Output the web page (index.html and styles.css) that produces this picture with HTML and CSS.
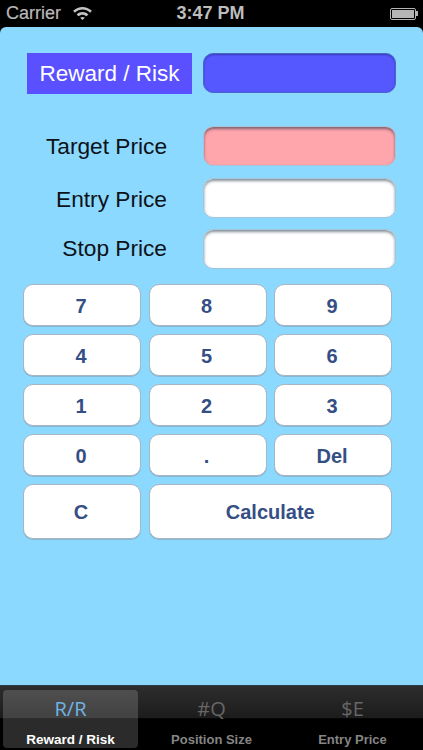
FILE: index.html
```html
<!DOCTYPE html>
<html lang="en">
<head>
<meta charset="utf-8">
<title>Reward / Risk</title>
<link rel="stylesheet" href="styles.css">
</head>
<body>
<div class="status">
  <div class="status-left">
    <span>Carrier</span>
    <svg class="wifi" viewBox="0 0 22 16" width="21" height="15"><path d="M1 6.200C6.800.6 15.200.6 21 6.200l-1.900 2C14.400 3.800 7.600 3.800 2.900 8.200z"/><path d="M4.800 10C8.400 6.600 13.600 6.600 17.200 10l-1.900 2c-2.500-2.300-6.100-2.300-8.600 0z"/><path d="M8.500 13.700c1.500-1.300 3.500-1.300 5 0L11 16z"/></svg>
  </div>
  <div class="status-time">3:47 PM</div>
  <div class="battery"><div class="battery-body"><div class="battery-fill"></div></div><div class="battery-tip"></div></div>
</div>
<main class="screen">
  <section class="row row-result">
    <div class="title">Reward / Risk</div>
    <div class="field field-result"></div>
  </section>
  <section class="prices">
    <div class="row"><label class="price-label label-target">Target Price</label><div class="field field-target"></div></div>
    <div class="row"><label class="price-label label-entry">Entry Price</label><div class="field"></div></div>
    <div class="row"><label class="price-label label-stop">Stop Price</label><div class="field"></div></div>
  </section>
  <section class="keypad">
    <button class="key">7</button><button class="key">8</button><button class="key">9</button>
    <button class="key">4</button><button class="key">5</button><button class="key">6</button>
    <button class="key">1</button><button class="key">2</button><button class="key">3</button>
    <button class="key">0</button><button class="key">.</button><button class="key">Del</button>
    <button class="key key-tall">C</button><button class="key key-tall key-wide">Calculate</button>
  </section>
</main>
<nav class="tabs">
  <div class="tab tab-active"><span class="tab-icon">R/R</span><span class="tab-label">Reward / Risk</span></div>
  <div class="tab"><span class="tab-icon">#Q</span><span class="tab-label">Position Size</span></div>
  <div class="tab"><span class="tab-icon">$E</span><span class="tab-label">Entry Price</span></div>
</nav>
</body>
</html>
```
FILE: styles.css
```css
* { box-sizing: border-box; }
html, body { margin: 0; padding: 0; }
body {
  width: 423px;
  height: 750px;
  overflow: hidden;
  background: #000;
  font-family: "Liberation Sans", Arial, sans-serif;
  display: flex;
  flex-direction: column;
}
.status {
  height: 27px;
  flex: none;
  display: grid;
  grid-template-columns: 1fr auto 1fr;
  align-items: center;
  padding: 0 5px 0 6px;
  color: #b9b9b9;
  font-size: 18px;
  background: #000;
}
.status-left { display: flex; align-items: center; gap: 11px; -webkit-text-stroke: 0.2px #b9b9b9; }
.wifi { fill: #c4c4c4; margin-top: -3px; }
.status-time { font-weight: 700; font-size: 18px; color: #bdbdbd; margin-left: -3px; }
.battery { justify-self: end; display: flex; align-items: center; }
.battery-body { width: 26px; height: 12px; border: 1px solid #b5b5b5; padding: 1px; border-radius: 2px; }
.battery-fill { width: 100%; height: 100%; background: #b5b5b5; }
.battery-tip { width: 2px; height: 5px; background: #b5b5b5; }
.screen {
  flex: 1;
  background: #8bd9ff;
  border-radius: 6px 6px 0 0;
  padding: 26px 27px 0 23px;
  display: flex;
  flex-direction: column;
}
.row { display: grid; grid-template-columns: 144px 193px; column-gap: 36px; align-items: center; justify-content: start; }
.row-result { grid-template-columns: 165px 193px; column-gap: 11px; margin-left: 4px; align-items: start; }
.title {
  height: 41px;
  background: #5a50ff;
  color: #fff;
  font-size: 22.5px;
  display: flex;
  align-items: center;
  justify-content: center;
  padding-top: 1px;
}
.field {
  height: 40px;
  background: #fff;
  border-radius: 10px;
  border: 1px solid #a3c4da;
  box-shadow: inset 0 2px 3px rgba(50, 70, 85, .6);
}
.field-result { background: #5558ff; border-color: #4a66c8; box-shadow: inset 0 1px 2px rgba(30, 40, 130, .6); }
.field-target { background: #ffa6ac; box-shadow: inset 0 2px 3px rgba(60, 60, 80, .65); }
.prices { margin-top: 32px; display: flex; flex-direction: column; gap: 11.5px; }
.price-label { font-size: 22.7px; color: #0c1217; text-align: right; display: block; line-height: 26px; }
.label-target { padding-bottom: 1px; }
.label-entry { padding-top: 2px; }
.label-stop { padding-bottom: 3px; }
.keypad {
  margin-top: 15px;
  display: grid;
  grid-template-columns: repeat(3, 118px);
  grid-auto-rows: 41.5px;
  column-gap: 7.5px;
  row-gap: 8.5px;
}
.key {
  margin: 0;
  padding: 3px 2px 0 0;
  background: #fff;
  border: 1.5px solid #a8b5c2;
  border-radius: 10px;
  box-shadow: 0 1px 0 rgba(130, 150, 170, .5);
  color: #354f85;
  font-family: "Liberation Sans", Arial, sans-serif;
  font-size: 20px;
  font-weight: 700;
}
.key-tall { height: 55px; padding-top: 2px; }
.key-wide { grid-column: span 2; padding-right: 0; }
.tabs {
  flex: none;
  height: 65px;
  display: grid;
  grid-template-columns: 141px 141px 141px;
  padding: 4px 0 2px;
  border-top: 1px solid #2c3a45;
  background: linear-gradient(#2d2d2d 0, #1c1c1c 50%, #000 51%, #000 100%);
}
.tab { display: flex; flex-direction: column; align-items: center; color: #858585; }
.tab-active {
  width: 135px;
  margin-left: 3px;
  background: rgba(255, 255, 255, .17);
  border-radius: 4px;
  color: #fff;
}
.tab-icon { font-family: "Open Sans", sans-serif; font-size: 20px; line-height: 28px; height: 34px; padding-top: 5px; color: #666; }
.tab-active .tab-icon { color: #70b3e2; }
.tab-label { font-size: 13px; font-weight: 700; line-height: 15px; margin-top: 8px; }
.tab-active .tab-label { font-size: 13.5px; }
```
